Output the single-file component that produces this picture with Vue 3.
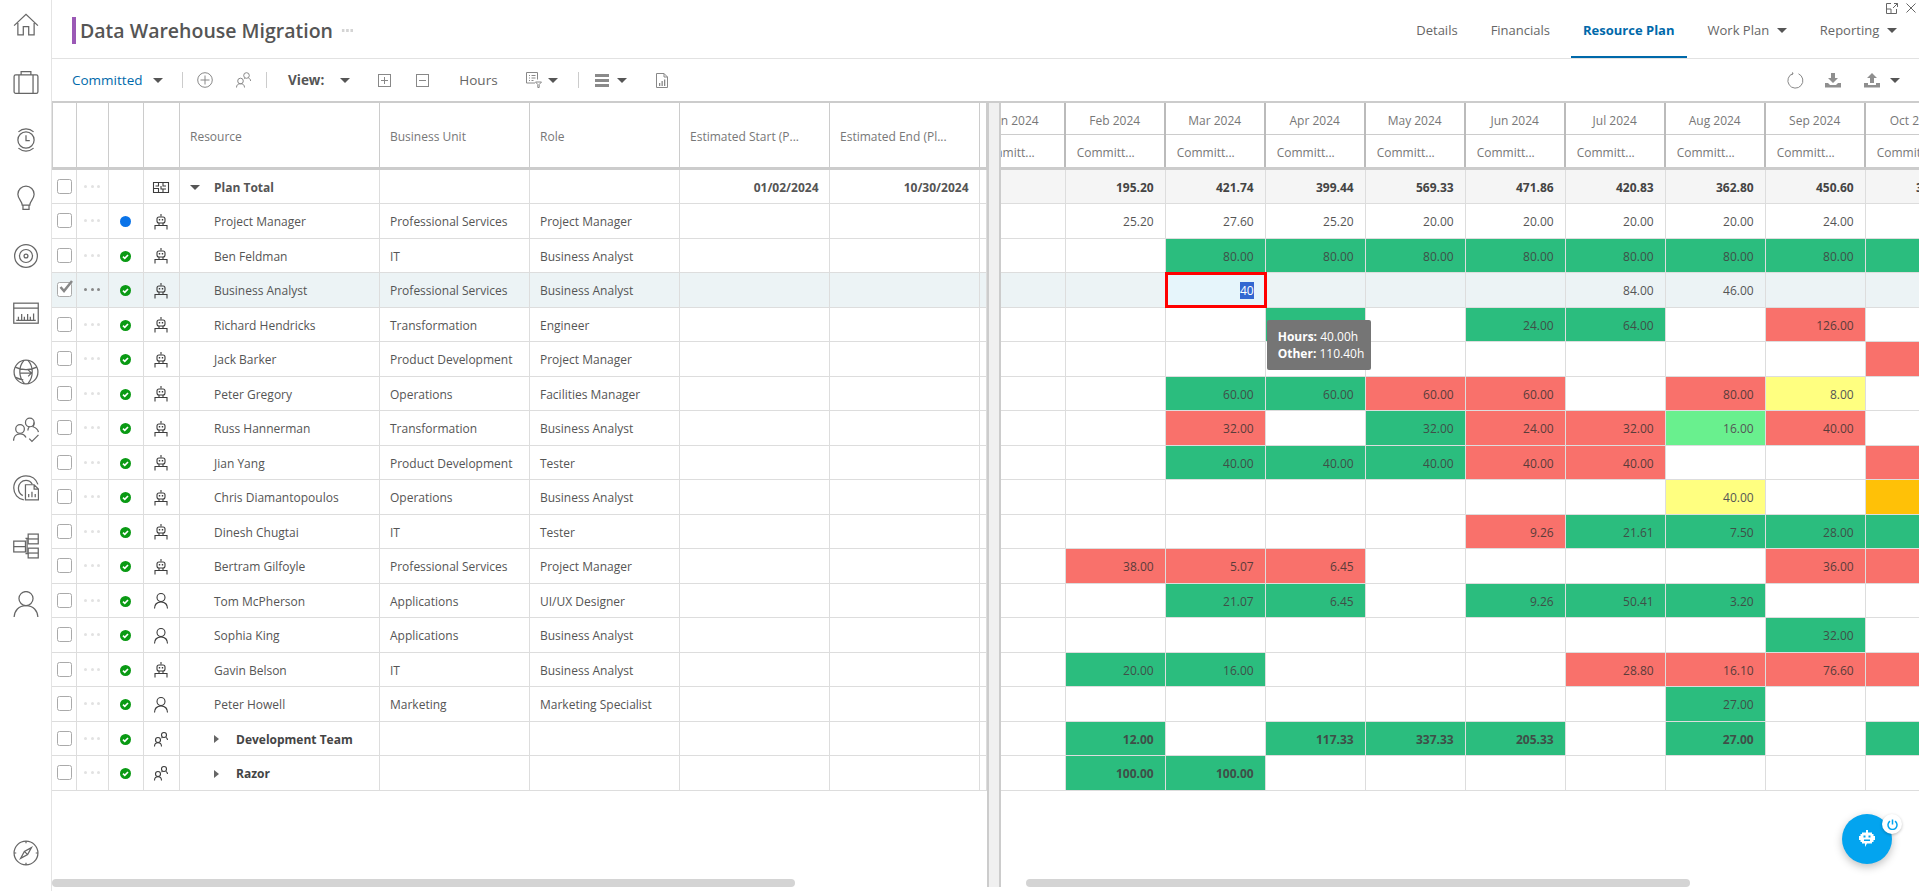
<script setup>
const months = ['Jan 2024', 'Feb 2024', 'Mar 2024', 'Apr 2024', 'May 2024', 'Jun 2024', 'Jul 2024', 'Aug 2024', 'Sep 2024', 'Oct 2024']

// cells run Jan..Oct, "g:80.00" = colour code + value
const rows = [
  { name: 'Plan Total', kind: 'plan', total: true, start: '01/02/2024', end: '10/30/2024', cells: ['', '195.20', '421.74', '399.44', '569.33', '471.86', '420.83', '362.80', '450.60', '356.20'] },
  { name: 'Project Manager', unit: 'Professional Services', role: 'Project Manager', kind: 'bot', status: 'blue', cells: ['', '25.20', '27.60', '25.20', '20.00', '20.00', '20.00', '20.00', '24.00', ''] },
  { name: 'Ben Feldman', unit: 'IT', role: 'Business Analyst', kind: 'bot', status: 'ok', cells: ['', '', 'g:80.00', 'g:80.00', 'g:80.00', 'g:80.00', 'g:80.00', 'g:80.00', 'g:80.00', 'g:'] },
  { name: 'Business Analyst', unit: 'Professional Services', role: 'Business Analyst', kind: 'bot', status: 'ok', selected: true, cells: ['', '', 'edit', '', '', '', '84.00', '46.00', '', ''] },
  { name: 'Richard Hendricks', unit: 'Transformation', role: 'Engineer', kind: 'bot', status: 'ok', cells: ['', '', '', 'g:', '', 'g:24.00', 'g:64.00', '', 'r:126.00', ''] },
  { name: 'Jack Barker', unit: 'Product Development', role: 'Project Manager', kind: 'bot', status: 'ok', cells: ['', '', '', '', '', '', '', '', '', 'r:'] },
  { name: 'Peter Gregory', unit: 'Operations', role: 'Facilities Manager', kind: 'bot', status: 'ok', cells: ['', '', 'g:60.00', 'g:60.00', 'r:60.00', 'r:60.00', '', 'r:80.00', 'y:8.00', ''] },
  { name: 'Russ Hannerman', unit: 'Transformation', role: 'Business Analyst', kind: 'bot', status: 'ok', cells: ['', '', 'r:32.00', '', 'g:32.00', 'r:24.00', 'r:32.00', 'l:16.00', 'r:40.00', ''] },
  { name: 'Jian Yang', unit: 'Product Development', role: 'Tester', kind: 'bot', status: 'ok', cells: ['', '', 'g:40.00', 'g:40.00', 'g:40.00', 'r:40.00', 'r:40.00', '', '', 'r:'] },
  { name: 'Chris Diamantopoulos', unit: 'Operations', role: 'Business Analyst', kind: 'bot', status: 'ok', cells: ['', '', '', '', '', '', '', 'y:40.00', '', 'a:'] },
  { name: 'Dinesh Chugtai', unit: 'IT', role: 'Tester', kind: 'bot', status: 'ok', cells: ['', '', '', '', '', 'r:9.26', 'g:21.61', 'g:7.50', 'g:28.00', 'g:'] },
  { name: 'Bertram Gilfoyle', unit: 'Professional Services', role: 'Project Manager', kind: 'bot', status: 'ok', cells: ['', 'r:38.00', 'r:5.07', 'r:6.45', '', '', '', '', 'r:36.00', 'r:'] },
  { name: 'Tom McPherson', unit: 'Applications', role: 'UI/UX Designer', kind: 'person', status: 'ok', cells: ['', '', 'g:21.07', 'g:6.45', '', 'g:9.26', 'g:50.41', 'g:3.20', '', ''] },
  { name: 'Sophia King', unit: 'Applications', role: 'Business Analyst', kind: 'person', status: 'ok', cells: ['', '', '', '', '', '', '', '', 'g:32.00', ''] },
  { name: 'Gavin Belson', unit: 'IT', role: 'Business Analyst', kind: 'bot', status: 'ok', cells: ['', 'g:20.00', 'g:16.00', '', '', '', 'r:28.80', 'r:16.10', 'r:76.60', 'r:'] },
  { name: 'Peter Howell', unit: 'Marketing', role: 'Marketing Specialist', kind: 'person', status: 'ok', cells: ['', '', '', '', '', '', '', 'g:27.00', '', ''] },
  { name: 'Development Team', kind: 'team', group: true, status: 'ok', cells: ['', 'g:12.00', '', 'g:117.33', 'g:337.33', 'g:205.33', '', 'g:27.00', '', 'g:'] },
  { name: 'Razor', kind: 'team', group: true, status: 'ok', cells: ['', 'g:100.00', 'g:100.00', '', '', '', '', '', '', ''] }
]

const cellColor = (c) => (c.includes(':') ? 'fill-' + c[0] : '')
const cellValue = (c) => (c.includes(':') ? c.split(':')[1] : c)
</script>

<template>
  <div class="app">
    <aside class="sidebar">
      <svg class="nav" viewBox="0 0 24 24"><path d="M1 13.500 12 3l11 10.500M4.500 11v11h5v-7.500h5V22h5V11" /></svg>
      <svg class="nav" viewBox="0 0 24 24"><rect x="1" y="5.500" width="22" height="17" rx="1.500" /><path d="M7.500 5.500V2.500h9v3M5.500 5.500v17M18.500 5.500v17" /></svg>
      <svg class="nav" viewBox="0 0 24 24"><circle cx="12" cy="12" r="7.500" /><path d="M12 7.500v5h3.500M5 4.500a10.500 10.500 0 0 1 14 0M5 19.500a10.500 10.500 0 0 0 14 0" /></svg>
      <svg class="nav" viewBox="0 0 24 24"><path d="M8.500 18.500C8.500 15 4.500 13 4.500 8.500a7.500 7.500 0 0 1 15 0c0 4.500-4 6.500-4 10zM9.200 18.500v4h5.600v-4" /></svg>
      <svg class="nav" viewBox="0 0 24 24"><circle cx="12" cy="12" r="10.500" /><circle cx="12" cy="12" r="6" /><circle cx="12" cy="12" r="1.800" /></svg>
      <svg class="nav" viewBox="0 0 24 24"><rect x="0.700" y="2" width="22.600" height="18.500" /><path d="M.7 6.500h22.600M3 17.800h18M5 17.500v-3M8 17.500v-5.500M10.500 17.500v-3M13.500 17.500v-5.500M16 17.500v-3M19 17.500v-6" /></svg>
      <svg class="nav" viewBox="0 0 24 24"><circle cx="12" cy="12" r="11" /><path d="M10 1.500C5 7 5 17 10.500 22.500M14 1.500c5 5.500 5 15 0 21M2 7.500c6 3 14 3 20 0M2.500 17c3 1.500 5 2 7 2.300M7 13h10M14 10l3 3-3 3" /></svg>
      <svg class="nav" viewBox="0 0 24 24"><circle cx="15.500" cy="5" r="4" /><circle cx="6.500" cy="11" r="4" /><path d="M.5 22c0-4 2.500-6.500 6-6.500 2.500 0 4.500 1.300 5.500 3.500M14 12.500c-.5-1 .5-3.500 1.500-3.500M19.500 5c0 2-.5 3.500-1 4 2.500.8 4.500 2.500 5 5M15 20l2.500 2.500 6-6" /></svg>
      <svg class="nav" viewBox="0 0 24 24"><path d="M10 23C4.500 22 .7 17.500.7 12A11.200 11.200 0 0 1 12 .7c5 0 9.500 3 11 8M9 19c-2.500-1.200-4-4-4-7a7 7 0 0 1 7-7c2.500 0 4.500 1.300 5.800 3.500" /><path d="M11.500 9h8l4 4v10h-12zM19.500 9v4h4M14.500 20.500v-3M17.500 20.500v-5M20.500 20.500v-3" /></svg>
      <svg class="nav" viewBox="0 0 24 24"><rect x="0.700" y="7.500" width="10.800" height="10" /><path d="M.7 12.500h10.800M11.500 5h3M11.500 19h3M13 5v14" /><rect x="14" y="1" width="9.300" height="9" /><path d="M14 5.500h9.300" /><rect x="14" y="14" width="9.300" height="9" /><path d="M14 18.500h9.300" /></svg>
      <svg class="nav" viewBox="0 0 24 24"><circle cx="12" cy="7" r="6.500" /><path d="M1 25c0-7 4.500-11.500 11-11.500S23 18 23 25" /></svg>
      <svg class="nav nav-bottom" viewBox="0 0 24 24"><circle cx="12" cy="12" r="11" /><path d="M12 1v2M12 21v2M1 12h2M21 12h2M17 7l-3.500 6.500L7 17l3.500-6.500zM10.500 10.500l3 3" /></svg>
    </aside>

    <main class="main">
      <header class="titlebar">
        <span class="title-mark"></span>
        <h1 class="title">Data Warehouse Migration</h1>
        <span class="title-dots"></span>
        <nav class="tabs">
          <span class="tab">Details</span>
          <span class="tab">Financials</span>
          <span class="tab tab-active">Resource Plan</span>
          <span class="tab">Work Plan<i class="caret tab-caret"></i></span>
          <span class="tab">Reporting<i class="caret tab-caret tab-caret-wide"></i></span>
        </nav>
        <div class="window-btns">
          <svg width="12" height="11" viewBox="0 0 12 11"><path d="M5 .5H.5v10h10V6M.5 6H5v4.500M7 5l4.500-4.500M8 .5h3.500V4" /></svg>
          <svg width="10" height="10" viewBox="0 0 10 10"><path d="M.5.5l9 9M9.500.5l-9 9" /></svg>
        </div>
      </header>

      <div class="toolbar">
        <span class="committed">Committed</span>
        <i class="caret ml10"></i>
        <i class="sep ml19"></i>
        <svg class="tool ml14" width="16" height="16" viewBox="0 0 16 16"><circle cx="8" cy="8" r="7.300" /><path d="M8 3.500v9M3.500 8h9" /></svg>
        <svg class="tool ml23" width="15" height="16" viewBox="0 0 15 16"><circle cx="10.500" cy="3.500" r="2.800" /><circle cx="4.500" cy="9" r="2.800" /><path d="M.5 15.500c0-2.500 1.500-3.800 4-3.800s4 1.300 4 3.800M9 7c-.5-.6-.5-.8-.3-1M12.500 6c1.300.6 2 1.500 2.200 3" /></svg>
        <i class="sep ml15"></i>
        <b class="view ml21">View:</b>
        <i class="caret ml16"></i>
        <svg class="tool ml28" width="13" height="13" viewBox="0 0 13 13"><rect x="0.500" y="0.500" width="12" height="12" /><path d="M6.500 3v7M3 6.500h7" /></svg>
        <svg class="tool ml25" width="13" height="13" viewBox="0 0 13 13"><rect x="0.500" y="0.500" width="12" height="12" /><path d="M3 6.500h7" /></svg>
        <span class="hours ml30">Hours</span>
        <svg class="tool ml28" width="16" height="16" viewBox="0 0 16 16"><path d="M9 11H.5V.5h11v7M3 3.500h1M5.500 3.500h4M3 6h1M5.500 6h4M3 8.500h1M5.500 8.500h2M9.500 10h6l-2.300 2.500v3h-1.400v-3z" /></svg>
        <i class="caret ml6"></i>
        <i class="sep ml20"></i>
        <span class="burger ml16"><i></i><i></i><i></i></span>
        <i class="caret ml8"></i>
        <svg class="tool ml29" width="12" height="15" viewBox="0 0 12 15"><path d="M.5.500h7.500l3.500 3.500v10.500H.5zM8 .5v3.500h3.500" /><path class="bars" d="M3 13V10h1.300v3zM5.500 13V8h1.300v5zM8 13V6.500h1.300V13z" /></svg>
        <div class="tools-right">
          <svg class="tool refresh" width="17" height="17" viewBox="0 0 17 17"><path d="M6 1.500a7.500 7.500 0 1 0 5.500.3M5.500 .3 6 2 4 2.800" /></svg>
          <svg class="solid" width="16" height="16" viewBox="0 0 16 16"><path d="M6 1h4v5h3l-5 5-5-5h3zM0 11h3l2 2h6l2-2h3v4.500H0z" /></svg>
          <svg class="solid" width="16" height="16" viewBox="0 0 16 16"><path d="M8 1l5 5h-3v5H6V6H3zM0 11h4v2h8v-2h4v4.500H0z" /></svg>
          <i class="caret upload-caret"></i>
        </div>
      </div>

      <div class="panes">
        <section class="left-pane">
          <div class="grid-row head-row">
            <div class="cell"></div>
            <div class="cell"></div>
            <div class="cell"></div>
            <div class="cell"></div>
            <div class="cell pad">Resource</div>
            <div class="cell pad">Business Unit</div>
            <div class="cell pad">Role</div>
            <div class="cell pad">Estimated Start (P...</div>
            <div class="cell pad">Estimated End (Pl...</div>
            <div class="cell"></div>
          </div>
          <div v-for="row in rows" :key="row.name" class="grid-row body-row" :class="{ 'row-selected': row.selected }">
            <div class="cell center">
              <span class="checkbox">
                <svg v-if="row.selected" width="18" height="16" viewBox="0 0 18 16"><path d="M3.500 8l3.500 4L15 2" /></svg>
              </span>
            </div>
            <div class="cell center"><span class="dots"><i></i><i></i><i></i></span></div>
            <div class="cell center">
              <i v-if="row.status === 'blue'" class="dot-blue"></i>
              <svg v-else-if="row.status === 'ok'" width="11" height="11" viewBox="0 0 11 11"><circle cx="5.500" cy="5.500" r="5.500" fill="#0a9a14" /><path d="M3 5.600l1.800 1.800L8 4" fill="none" stroke="#fff" stroke-width="1.600" /></svg>
            </div>
            <div class="cell center">
              <svg v-if="row.kind === 'plan'" class="ico" width="16" height="11" viewBox="0 0 16 11"><path d="M.5.500h15v10H.5zM5.500.5v3.500H2.500M.5 6.500h5v4M10 .5v3.500h3M8 4v3h5M10 7v3.500" /></svg>
              <svg v-else-if="row.kind === 'bot'" class="ico bot" width="14" height="16" viewBox="0 0 14 16"><path d="M7 0v2.500M1 15.500v-4h12v4M5 9v2.500M9 9v2.500" /><rect x="3" y="3" width="8" height="6" rx="2" /><path class="eyes" d="M4.800 5h1.400v1.400H4.800zM7.800 5h1.400v1.400H7.800z" /></svg>
              <svg v-else-if="row.kind === 'person'" class="ico" width="14" height="16" viewBox="0 0 14 16"><circle cx="7" cy="4.500" r="4" /><path d="M.5 15.500c0-4 2.500-6.500 6.500-6.500s6.500 2.500 6.500 6.500" /></svg>
              <svg v-else-if="row.kind === 'team'" class="ico" width="14" height="15" viewBox="0 0 14 15"><circle cx="10" cy="3" r="2.500" /><circle cx="4" cy="8" r="2.500" /><path d="M.5 14.500c0-2.500 1.300-3.800 3.500-3.800s3.500 1.300 3.500 3.800M7.500 6c.5-.3.800-.4 1-.5M12 5.500c1 .5 1.500 1.300 1.500 2.500" /></svg>
            </div>
            <div class="cell name" :class="{ 'name-total': row.total, 'name-group': row.group }">
              <i v-if="row.total" class="caret total-caret"></i>
              <i v-if="row.group" class="arrow-right"></i>
              <span>{{ row.name }}</span>
            </div>
            <div class="cell pad">{{ row.unit }}</div>
            <div class="cell pad">{{ row.role }}</div>
            <div class="cell date">{{ row.start }}</div>
            <div class="cell date">{{ row.end }}</div>
            <div class="cell"></div>
          </div>
          <div class="scroll-thumb left-thumb"></div>
        </section>

        <div class="splitter"></div>

        <section class="right-pane">
          <div class="track">
            <div class="months head-months">
              <div v-for="m in months" :key="m" class="month-head">
                <div class="month-name">{{ m }}</div>
                <div class="month-sub">Committ...</div>
              </div>
            </div>
            <div v-for="row in rows" :key="row.name" class="months body-months" :class="{ 'row-selected': row.selected, 'row-total': row.total, 'row-bold': row.group || row.total }">
              <div v-for="(c, i) in row.cells" :key="i" class="value" :class="[cellColor(c), { 'value-edit': c === 'edit' }]">
                <template v-if="c === 'edit'">
                  <span class="picked">40</span>
                  <div class="tip"><b>Hours:</b> 40.00h<br /><b>Other:</b> 110.40h</div>
                </template>
                <template v-else>{{ cellValue(c) }}</template>
              </div>
            </div>
          </div>
          <div class="scroll-thumb right-thumb"></div>
        </section>
      </div>
    </main>

    <button class="fab">
      <svg width="16" height="18" viewBox="0 0 16 18"><path fill="#fff" d="M7 0h2v2.500h4v1.500h1.500v2H16v4h-1.500v2H13v1.500H8L6 17v-3.500H3V12H1.500v-2H0V6h1.500V4H3V2.500h4z" /><path fill="#03a4ef" d="M4.500 5.500h2v2h-2zM9.500 5.500h2v2h-2zM5 9.500h6V11H5z" /></svg>
      <span class="fab-power">
        <svg width="11" height="11" viewBox="0 0 11 11"><path d="M5.500 .5v5M3 2.200a4.500 4.500 0 1 0 5 0" /></svg>
      </span>
    </button>
  </div>
</template>

<style>
html, body { margin: 0; background: #fff; overflow: hidden; }
</style>

<style scoped>
.app {
  display: flex;
  position: relative;
  width: 1919px;
  height: 891px;
  overflow: hidden;
  font-family: "Open Sans", "Liberation Sans", sans-serif;
  font-size: 12px;
  color: #555;
}
.sidebar {
  display: flex;
  flex-direction: column;
  align-items: center;
  gap: 32px;
  box-sizing: border-box;
  width: 52px;
  flex: none;
  padding: 11px 0 25px;
  border-right: 1px solid #e4e4e4;
}
.nav {
  width: 26px;
  height: 26px;
  flex: none;
  fill: none;
  stroke: #666;
  stroke-width: 1.150;
}
.nav-bottom { margin-top: auto; }
.main {
  flex: 1;
  min-width: 0;
  display: flex;
  flex-direction: column;
}
.titlebar {
  position: relative;
  display: flex;
  align-items: center;
  height: 58px;
  flex: none;
  padding-left: 20px;
  border-bottom: 1px solid #e2e2e2;
}
.title-mark {
  width: 4px;
  height: 27px;
  margin-top: 3px;
  background: #9b59b6;
}
.title {
  margin: 3px 0 0 4px;
  font-size: 19.500px;
  font-weight: 600;
  color: #555;
}
.title-dots {
  width: 13px;
  height: 3px;
  margin: 3px 0 0 8px;
  background: radial-gradient(circle, #d4d4d4 1.500px, transparent 1.600px) 0 0 / 4.300px 3px;
}
.tabs {
  display: flex;
  align-items: stretch;
  gap: 8px;
  height: 100%;
  margin-left: auto;
  padding-right: 9.500px;
  font-size: 13px;
}
.tab {
  display: flex;
  align-items: center;
  padding: 4px 12.500px 0;
  border-bottom: 2px solid transparent;
  color: #666;
}
.tab-active {
  font-weight: 700;
  color: #0069aa;
  border-bottom-color: #0069aa;
}
.tab-caret { margin-left: 7.700px; }
.tab-caret-wide { margin-left: 7.800px; }
.window-btns {
  position: absolute;
  top: 3px;
  right: 3px;
  display: flex;
  gap: 8px;
}
.window-btns svg { fill: none; stroke: #666; }
.caret {
  display: inline-block;
  flex: none;
  width: 0;
  height: 0;
  border-left: 5px solid transparent;
  border-right: 5px solid transparent;
  border-top: 5.500px solid #555;
}
.toolbar {
  display: flex;
  align-items: center;
  height: 42px;
  flex: none;
  padding-left: 20px;
  border-bottom: 2px solid #ccc;
  font-size: 13.500px;
}
.committed { color: #0069aa; }
.view { color: #555; font-weight: 700; }
.hours { color: #666; }
.sep { width: 1px; height: 16px; background: #ccc; flex: none; }
.tool { fill: none; stroke: #888; flex: none; }
.tool .bars { fill: #888; stroke: none; }
.burger { display: flex; flex-direction: column; gap: 2px; width: 14px; flex: none; }
.burger i { height: 3px; background: #8a8a8a; }
.ml6 { margin-left: 6px; }
.ml8 { margin-left: 8.500px; }
.ml10 { margin-left: 10px; }
.ml14 { margin-left: 14px; }
.ml15 { margin-left: 15px; }
.ml16 { margin-left: 16px; }
.ml19 { margin-left: 19.500px; }
.ml20 { margin-left: 20px; }
.ml21 { margin-left: 21px; }
.ml23 { margin-left: 23px; }
.ml25 { margin-left: 25px; }
.ml28 { margin-left: 28px; }
.ml29 { margin-left: 29px; }
.ml30 { margin-left: 30px; }
.tools-right {
  display: flex;
  align-items: center;
  margin-left: auto;
  padding-right: 19px;
}
.tools-right .solid { fill: #8f8f8f; margin-left: 21px; }
.tools-right .solid + .solid { margin-left: 23px; }
.upload-caret { margin-left: 10px; }
.panes {
  flex: 1;
  min-height: 0;
  display: flex;
  padding-bottom: 4px;
}
.left-pane {
  width: 935px;
  flex: none;
  display: flex;
  flex-direction: column;
}
.grid-row {
  display: grid;
  grid-template-columns: 24.500px 32px 35.500px 35.500px 200px 150px 150px 150px 150px 7.500px;
  box-sizing: border-box;
  flex: none;
}
.head-row {
  height: 66.500px;
  border-bottom: 3px solid #ccc;
  border-left: 1px solid #ccc;
  color: #777;
  grid-template-columns: 23.500px 32px 35.500px 35.500px 200px 150px 150px 150px 150px 7.500px;
}
.head-row .cell { border-right-color: #ccc; padding-top: 4px; }
.body-row {
  height: 34.500px;
  border-bottom: 1px solid #ddd;
}
.body-row .cell { padding-top: 1.500px; }
.cell {
  display: flex;
  align-items: center;
  min-width: 0;
  box-sizing: border-box;
  border-right: 1px solid #ddd;
  white-space: nowrap;
}
.pad { padding-left: 10.500px; }
.center { justify-content: center; }
.date {
  justify-content: flex-end;
  padding-right: 10px;
  font-weight: 700;
}
.checkbox {
  position: relative;
  box-sizing: border-box;
  width: 15px;
  height: 15px;
  margin: -2px 0 0 1px;
  border: 1.500px solid #aaa;
  border-radius: 2.500px;
  background: #fff;
}
.checkbox svg {
  position: absolute;
  left: -1px;
  top: -4px;
  fill: none;
  stroke: #888;
  stroke-width: 2.500;
}
.dots { display: flex; gap: 3.500px; margin-top: -2px; }
.dots i {
  width: 3px;
  height: 3px;
  border-radius: 50%;
  background: #e2e2e2;
}
.row-selected { background: #ecf3f5; }
.row-selected .dots i { background: #888; }
.dot-blue {
  width: 11px;
  height: 11px;
  border-radius: 50%;
  background: #0a73e8;
}
.ico { fill: none; stroke: #3c3c3c; stroke-width: 1.100; overflow: visible; }
.ico .eyes { fill: #3c3c3c; stroke: none; }
.name { padding-left: 34.500px; }
.name-total {
  padding-left: 10.500px;
  font-weight: 700;
}
.total-caret { margin-right: 14px; }
.name-group {
  font-weight: 700;
  color: #444;
}
.arrow-right {
  flex: none;
  width: 0;
  height: 0;
  margin-right: 17px;
  border-top: 4.500px solid transparent;
  border-bottom: 4.500px solid transparent;
  border-left: 5.500px solid #666;
}
.scroll-thumb {
  flex: none;
  height: 8px;
  margin-top: auto;
  border-radius: 4px;
  background: #d4d4d4;
}
.left-thumb { width: 743px; }
.right-thumb { width: 664px; margin-left: 25px; }
.splitter {
  width: 10px;
  flex: none;
  border-left: 2px solid #ccc;
  border-right: 2px solid #ccc;
  background: #f0f0f0;
}
.right-pane {
  flex: 1;
  min-width: 0;
  display: flex;
  flex-direction: column;
  overflow: hidden;
}
.track { margin-left: -35.300px; flex: none; }
.months {
  display: grid;
  grid-template-columns: repeat(10, 100px);
  width: 1000px;
}
.head-months {
  height: 66.500px;
  box-sizing: border-box;
  border-bottom: 3px solid #ccc;
  color: #777;
}
.month-head {
  display: grid;
  grid-template-rows: 32px 1fr;
  border-right: 2px solid #bbb;
}
.month-name {
  display: flex;
  align-items: center;
  justify-content: center;
  padding-top: 3px;
  border-bottom: 1px solid #ccc;
}
.month-sub {
  display: flex;
  align-items: center;
  padding: 3px 0 0 11px;
}
.body-months {
  height: 34.500px;
  box-sizing: border-box;
  border-bottom: 1px solid #ddd;
}
.row-total { background: #f5f5f5; }
.row-bold { font-weight: 700; color: #444; }
.value {
  display: flex;
  align-items: center;
  justify-content: flex-end;
  box-sizing: border-box;
  padding: 1.500px 11px 0 0;
  border-right: 1px solid #ddd;
}
.fill-g { background: #2bbd7e; color: #3f4f48; }
.fill-r { background: #f9716b; color: #5a3c3a; }
.fill-y { background: #ffff80; }
.fill-l { background: #69f08e; }
.fill-a { background: #ffc107; }
.value-edit {
  position: relative;
  z-index: 2;
  background: #e6f5fb;
  outline: 3px solid #f00;
  outline-offset: -2px;
}
.picked {
  padding: 0;
  background: #3367d1;
  color: #fff;
  line-height: 17px;
}
.tip {
  position: absolute;
  left: 101px;
  top: 47px;
  z-index: 3;
  width: 104px;
  height: 50px;
  box-sizing: border-box;
  padding: 8px 0 0 11px;
  border-radius: 2px;
  background: #757575;
  color: #fff;
  font-size: 12px;
  font-weight: 400;
  line-height: 17px;
  text-align: left;
}
.fab {
  position: absolute;
  left: 1842px;
  top: 814px;
  display: flex;
  align-items: center;
  justify-content: center;
  width: 50px;
  height: 50px;
  padding: 0;
  border: 0;
  border-radius: 50%;
  background: #03a4ef;
  box-shadow: 0 3px 8px rgba(0, 0, 0, 0.25);
}
.fab-power {
  position: absolute;
  left: 40px;
  top: 0;
  display: flex;
  align-items: center;
  justify-content: center;
  width: 20px;
  height: 20px;
  border-radius: 50%;
  background: #fff;
  box-shadow: 0 1px 3px rgba(0, 0, 0, 0.25);
}
.fab-power svg { fill: none; stroke: #03a4ef; stroke-width: 1.500; }
</style>
